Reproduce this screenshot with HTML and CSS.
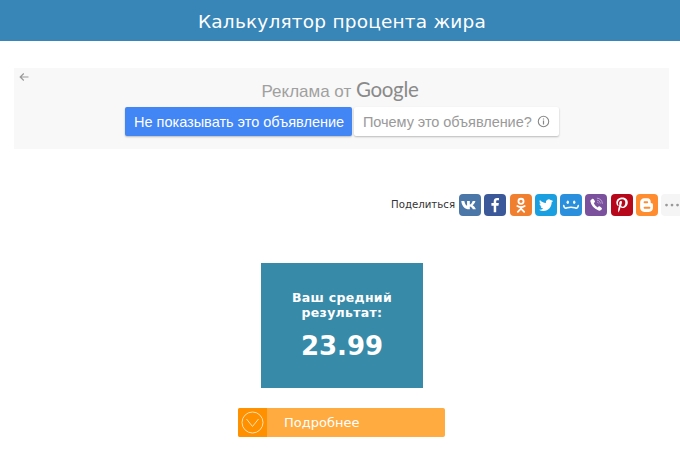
FILE: index.html
```html
<!DOCTYPE html>
<html lang="ru">
<head>
    <meta charset="UTF-8">
    <meta name="viewport" content="width=device-width, initial-scale=1.0">
    <title>Калькулятор процента жира</title>
    <link rel="stylesheet" href="styles.css">
</head>
<body>
    <header class="top-bar">Калькулятор процента жира</header>

    <!-- рекламный блок -->
    <section class="ad">
        <svg class="ad-back" width="10" height="10" viewBox="0 0 10 10"><path d="M9.5 5H1.5M4.8 1.5 1.2 5l3.6 3.5" fill="none" stroke="#9a9a9a" stroke-width="1.2"/></svg>
        <div class="ad-title">Реклама от <span class="ad-google">Google</span></div>
        <div class="ad-buttons">
            <a class="ad-btn ad-btn-blue" href="#">Не показывать это объявление</a>
            <a class="ad-btn ad-btn-white" href="#">Почему это объявление?
                <svg width="13" height="13" viewBox="0 0 13 13"><circle cx="6.5" cy="6.5" r="5.2" fill="none" stroke="#888" stroke-width="1.1"/><path d="M6.5 5.6v3.8M6.5 3.4v1.2" stroke="#888" stroke-width="1.2"/></svg>
            </a>
        </div>
    </section>

    <!-- кнопки соцсетей -->
    <div class="share">
        <span class="share-label">Поделиться</span>
        <a class="share-icon vk" href="#"><svg viewBox="0 0 24 24"><path d="M2.500 7.500h3.300c.6 2.800 1.700 4.700 3 5.300V7.500h3v3.900c1.300-.3 2.500-1.800 3.100-3.900h3c-.5 2.200-1.800 3.800-3 4.700 1.400.8 2.700 2.400 3.500 4.500h-3.300c-.7-1.700-1.900-3-3.300-3.200v3.200h-.9C6.700 16.700 3 13.400 2.500 7.500z" fill="#fff"/></svg></a>
        <a class="share-icon fb" href="#"><svg viewBox="0 0 24 24"><path d="M13.300 20v-7.300h2.500l.4-2.800h-2.900V8.300c0-.8.300-1.400 1.400-1.400h1.600V4.400C16 4.300 15.200 4.300 14.300 4.300c-2.200 0-3.700 1.300-3.700 3.700v1.900H8.100v2.800h2.500V20z" fill="#fff"/></svg></a>
        <a class="share-icon ok" href="#"><svg viewBox="0 0 24 24"><circle cx="12" cy="8" r="2.800" fill="none" stroke="#fff" stroke-width="2"/><path d="M8 13c2.500 1.700 5.500 1.700 8 0M12 14.500V16M8.500 19.500l3.500-3.500 3.500 3.500" fill="none" stroke="#fff" stroke-width="2" stroke-linecap="round"/></svg></a>
        <a class="share-icon tw" href="#"><svg viewBox="-2 -2 28 28"><path d="M21 6.600c-.7.300-1.400.5-2.100.6.800-.5 1.300-1.200 1.600-2-.7.400-1.500.7-2.300.9a3.700 3.700 0 0 0-6.300 3.400C8.800 9.300 6.100 7.900 4.300 5.700c-1 1.700-.5 3.800 1.100 4.900-.6 0-1.200-.2-1.700-.5 0 1.800 1.300 3.300 3 3.700-.5.100-1.100.2-1.700.1.500 1.500 1.900 2.500 3.500 2.600A7.500 7.500 0 0 1 3 18c1.700 1.100 3.600 1.700 5.700 1.700 6.800 0 10.700-5.800 10.500-11.100.7-.5 1.300-1.200 1.800-2z" fill="#fff"/></svg></a>
        <a class="share-icon mm" href="#"><svg viewBox="0 0 24 24"><ellipse cx="8.500" cy="9" rx="1.300" ry="1.800" fill="#fff"/><ellipse cx="15.500" cy="9" rx="1.300" ry="1.800" fill="#fff"/><path d="M4 12.500c.3 2 1.300 3.200 2.600 2.900 1.500-.3 3-.9 5.400-.9s3.900.6 5.400.9c1.300.3 2.300-.9 2.600-2.900" fill="none" stroke="#fff" stroke-width="1.700" stroke-linecap="round"/></svg></a>
        <a class="share-icon vb" href="#"><svg viewBox="0 0 24 24"><path d="M7.500 5.500c1-.6 1.700-.3 2.200.5l1 1.700c.4.700.2 1.300-.4 1.700l-.7.500c.7 1.900 2.200 3.700 4.300 4.700l.6-.7c.5-.6 1.100-.7 1.800-.2l1.600 1.200c.7.600.8 1.300.2 2.100-.8 1.100-2 1.500-3.300 1-5.200-2.100-8-5.300-8.900-9.800-.2-1 .3-2 1.600-2.500z" fill="#fff"/><path d="M13 4.500c3.500.3 5.800 2.600 6 6.200M13.200 6.800c2 .2 3.300 1.500 3.500 3.600M13.400 8.900c.8.100 1.200.6 1.300 1.300" fill="none" stroke="#c9b3dd" stroke-width=".9"/></svg></a>
        <a class="share-icon pt" href="#"><svg viewBox="0 0 24 24"><path d="M12.300 3.800c-4.200 0-6.500 2.700-6.500 5.700 0 1.400.8 3.100 2 3.700.4.100.5-.7.400-1.100-.9-1.200-.8-2.900-.2-4 .9-1.700 2.600-2.400 4.200-2.300 2.300.2 3.500 1.700 3.400 3.700-.1 2.500-1.300 4.300-3 4.300-1 0-1.700-.8-1.400-1.800.3-1.200.8-2.400.8-3.300 0-1.800-2.800-1.600-3 1 0 .8.200 1.400.2 1.400l-1.300 5.300c-.2 1.100-.1 2.700 0 3.700.9-.8 1.600-2.400 1.900-3.500l.7-2.500c.4.700 1.400 1.200 2.400 1.200 3.200 0 5.400-2.900 5.400-6.300 0-3.200-2.700-5.200-6-5.200z" fill="#fff"/></svg></a>
        <a class="share-icon bl" href="#"><svg viewBox="0 0 24 24"><path d="M9 4.500h3.500c2.400 0 3.500 1.700 3.500 3.500v1.200c0 .6.400.8 1 .8 1 0 1.500.7 1.500 1.600V15c0 2.600-1.800 4.500-4.500 4.500H9c-2.500 0-4.500-2-4.500-4.500V9C4.500 6.500 6.500 4.500 9 4.500z" fill="#fff"/><path d="M9.300 9h3M9.300 15h5.400" stroke="#ff8c2f" stroke-width="2" stroke-linecap="round"/></svg></a>
        <a class="share-icon more" href="#"><svg viewBox="0 0 24 24"><circle cx="6" cy="12" r="1.500" fill="#999"/><circle cx="12" cy="12" r="1.500" fill="#999"/><circle cx="18" cy="12" r="1.500" fill="#999"/></svg></a>
    </div>

    <!-- результат -->
    <div class="result">
        <div class="result-label">Ваш средний результат:</div>
        <div class="result-value">23.99</div>
    </div>

    <a class="more-btn" href="#">
        <span class="more-btn-icon">
            <svg width="23" height="23" viewBox="0 0 23 23"><circle cx="11.500" cy="11.500" r="10.500" fill="none" stroke="#ffe0b0" stroke-width="1"/><path d="M5.500 8l6 7.500 6-7.500" fill="none" stroke="#ffe0b0" stroke-width="1"/></svg>
        </span>
        <span class="more-btn-text">Подробнее</span>
    </a>
</body>
</html>
```

FILE: styles.css
```css
*{
    margin: 0;
    padding: 0;
    box-sizing: border-box;
}
body{
    background-color: #fff;
    font-family: "DejaVu Sans", Verdana, sans-serif;
    overflow: hidden;
}
a{
    text-decoration: none;
}
/* шапка */
.top-bar{
    height: 41px;
    line-height: 43px;
    background-color: #3885b7;
    color: #fff;
    font-size: 18.5px;
    letter-spacing: 0.2px;
    text-align: center;
    padding-left: 4px;
}
/* реклама */
.ad{
    position: relative;
    width: 655px;
    height: 81px;
    margin: 27px 0 0 14px;
    padding-top: 9px;
    background-color: #f8f8f8;
    font-family: "Liberation Sans", Arial, sans-serif;
}
.ad-back{
    position: absolute;
    left: 5px;
    top: 4px;
}
.ad-title{
    height: 30px;
    line-height: 24px;
    text-align: center;
    font-size: 17px;
    color: #a0a0a0;
    padding-right: 3px;
}
.ad-google{
    font-family: "Lato", sans-serif;
    font-size: 20.5px;
    color: #8a8a8a;
    letter-spacing: -0.3px;
}
.ad-buttons{
    display: flex;
    gap: 2px;
    margin-left: 111px;
}
.ad-btn{
    display: flex;
    align-items: center;
    height: 29px;
    font-size: 14.5px;
    border-radius: 2px;
    box-shadow: 0 1px 2px rgba(0,0,0,.25);
}
.ad-btn-blue{
    width: 227px;
    padding-left: 9px;
    background-color: #4285f4;
    color: #fff;
}
.ad-btn-white{
    width: 205px;
    padding-left: 9px;
    gap: 5px;
    background-color: #fff;
    color: #9a9a9a;
    letter-spacing: -0.05px;
}
/* поделиться */
.share{
    display: flex;
    align-items: center;
    height: 24px;
    margin-top: 44px;
    margin-left: 391px;
    width: 320px;
}
.share-label{
    width: 68px;
    margin-bottom: 2px;
    font-size: 10.2px;
    color: #333;
}
.share-icon{
    flex: none;
    width: 22px;
    height: 22px;
    margin-right: 3.25px;
    border-radius: 4px;
}
.share-icon svg{
    display: block;
    width: 22px;
    height: 22px;
}
.vk{ background-color: #4a76a8; }
.fb{ background-color: #3b5998; }
.ok{ background-color: #f07f30; }
.tw{ background-color: #1a9fe0; }
.mm{ background-color: #2a8fdc; }
.vb{ background-color: #7b519d; }
.pt{ background-color: #b7081b; }
.bl{ background-color: #ff8c2f; }
.more{ background-color: #f5f5f5; }
/* результат */
.result{
    width: 162px;
    height: 125px;
    margin: 46px 0 0 261px;
    padding: 27px 14px 0;
    background-color: #378aa8;
    color: #fff;
    font-weight: bold;
    text-align: center;
}
.result-label{
    font-size: 12.5px;
    line-height: 15px;
    letter-spacing: 0.3px;
}
.result-value{
    margin-top: 10px;
    font-size: 26px;
    line-height: 32px;
}
/* кнопка подробнее */
.more-btn{
    display: flex;
    width: 207px;
    height: 29px;
    margin: 20px 0 0 238px;
    background-color: #ffab40;
    border-radius: 2px;
    color: #fff;
}
.more-btn-icon{
    display: flex;
    align-items: center;
    justify-content: center;
    width: 29px;
    background-color: #ff9000;
    border-radius: 2px 0 0 2px;
}
.more-btn-text{
    margin-left: 17px;
    font-size: 13px;
    line-height: 30px;
}
```
